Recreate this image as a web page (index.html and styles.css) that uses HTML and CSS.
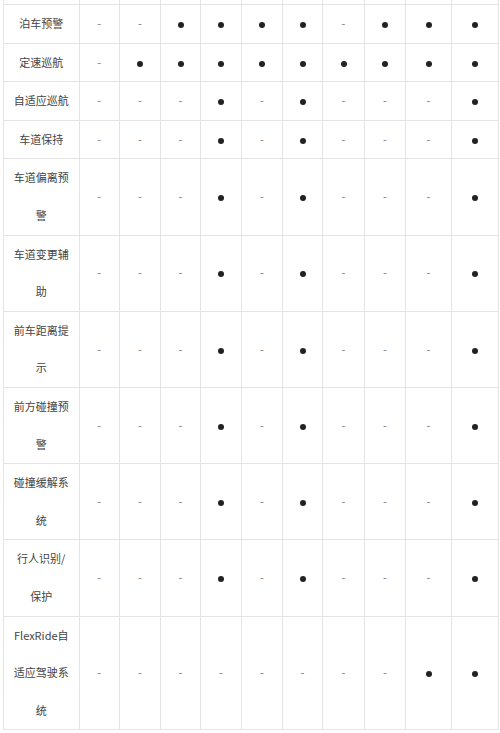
FILE: index.html
```html
<!DOCTYPE html>
<html lang="zh-CN">
<head>
<meta charset="utf-8">
<title>配置表</title>
<link rel="stylesheet" href="styles.css">
</head>
<body>
<div class="viewport">
<table class="spec">
<colgroup>
<col class="c-label"><col class="c1"><col class="c2"><col class="c3"><col class="c4"><col class="c5"><col class="c6"><col class="c7"><col class="c8"><col class="c9"><col class="c10">
</colgroup>
<tbody>
<tr class="prev"><td></td><td></td><td></td><td></td><td></td><td></td><td></td><td></td><td></td><td></td><td></td></tr>
<tr><td class="label">泊车预警</td><td>-</td><td>-</td><td><i class="dot"></i></td><td><i class="dot"></i></td><td><i class="dot"></i></td><td><i class="dot"></i></td><td>-</td><td><i class="dot"></i></td><td><i class="dot"></i></td><td><i class="dot"></i></td></tr>
<tr><td class="label">定速巡航</td><td>-</td><td><i class="dot"></i></td><td><i class="dot"></i></td><td><i class="dot"></i></td><td><i class="dot"></i></td><td><i class="dot"></i></td><td><i class="dot"></i></td><td><i class="dot"></i></td><td><i class="dot"></i></td><td><i class="dot"></i></td></tr>
<tr><td class="label">自适应巡航</td><td>-</td><td>-</td><td>-</td><td><i class="dot"></i></td><td>-</td><td><i class="dot"></i></td><td>-</td><td>-</td><td>-</td><td><i class="dot"></i></td></tr>
<tr><td class="label">车道保持</td><td>-</td><td>-</td><td>-</td><td><i class="dot"></i></td><td>-</td><td><i class="dot"></i></td><td>-</td><td>-</td><td>-</td><td><i class="dot"></i></td></tr>
<tr><td class="label">车道偏离预警</td><td>-</td><td>-</td><td>-</td><td><i class="dot"></i></td><td>-</td><td><i class="dot"></i></td><td>-</td><td>-</td><td>-</td><td><i class="dot"></i></td></tr>
<tr><td class="label">车道变更辅助</td><td>-</td><td>-</td><td>-</td><td><i class="dot"></i></td><td>-</td><td><i class="dot"></i></td><td>-</td><td>-</td><td>-</td><td><i class="dot"></i></td></tr>
<tr><td class="label">前车距离提示</td><td>-</td><td>-</td><td>-</td><td><i class="dot"></i></td><td>-</td><td><i class="dot"></i></td><td>-</td><td>-</td><td>-</td><td><i class="dot"></i></td></tr>
<tr><td class="label">前方碰撞预警</td><td>-</td><td>-</td><td>-</td><td><i class="dot"></i></td><td>-</td><td><i class="dot"></i></td><td>-</td><td>-</td><td>-</td><td><i class="dot"></i></td></tr>
<tr><td class="label">碰撞缓解系统</td><td>-</td><td>-</td><td>-</td><td><i class="dot"></i></td><td>-</td><td><i class="dot"></i></td><td>-</td><td>-</td><td>-</td><td><i class="dot"></i></td></tr>
<tr><td class="label">行人识别/保护</td><td>-</td><td>-</td><td>-</td><td><i class="dot"></i></td><td>-</td><td><i class="dot"></i></td><td>-</td><td>-</td><td>-</td><td><i class="dot"></i></td></tr>
<tr><td class="label">FlexRide自适应驾驶系统</td><td>-</td><td>-</td><td>-</td><td>-</td><td>-</td><td>-</td><td>-</td><td>-</td><td><i class="dot"></i></td><td><i class="dot"></i></td></tr>
</tbody>
</table>
</div>
</body>
</html>
```
FILE: styles.css
```css
html, body {
  margin: 0;
  padding: 0;
  background: #fff;
}
.viewport {
  width: 500px;
  height: 733px;
  overflow: hidden;
  padding-left: 3px;
  box-sizing: border-box;
}
.spec {
  border-collapse: collapse;
  table-layout: fixed;
  width: 495px;
  margin-top: -34.6px;
  font-family: "Noto Sans CJK SC", "Noto Sans", sans-serif;
  font-size: 11px;
  color: #444;
}
.c-label { width: 75.5px; }
.c1 { width: 40.5px; }
.c2 { width: 41px; }
.c3 { width: 40px; }
.c4 { width: 41px; }
.c5 { width: 41px; }
.c6 { width: 40px; }
.c7 { width: 42px; }
.c8 { width: 41px; }
.c9 { width: 46px; }
.c10 { width: 47px; }
.spec td {
  border: 1px solid #e4e4e4;
  text-align: center;
  vertical-align: middle;
  line-height: 37.6px;
  padding: 0;
  color: #777;
  word-break: break-all;
}
.spec .prev td {
  height: 37.6px;
}
.spec td.label {
  padding: 0 8px;
  color: #444;
}
.dot {
  display: inline-block;
  width: 6px;
  height: 6px;
  border-radius: 50%;
  background: #222;
  vertical-align: middle;
}
```
